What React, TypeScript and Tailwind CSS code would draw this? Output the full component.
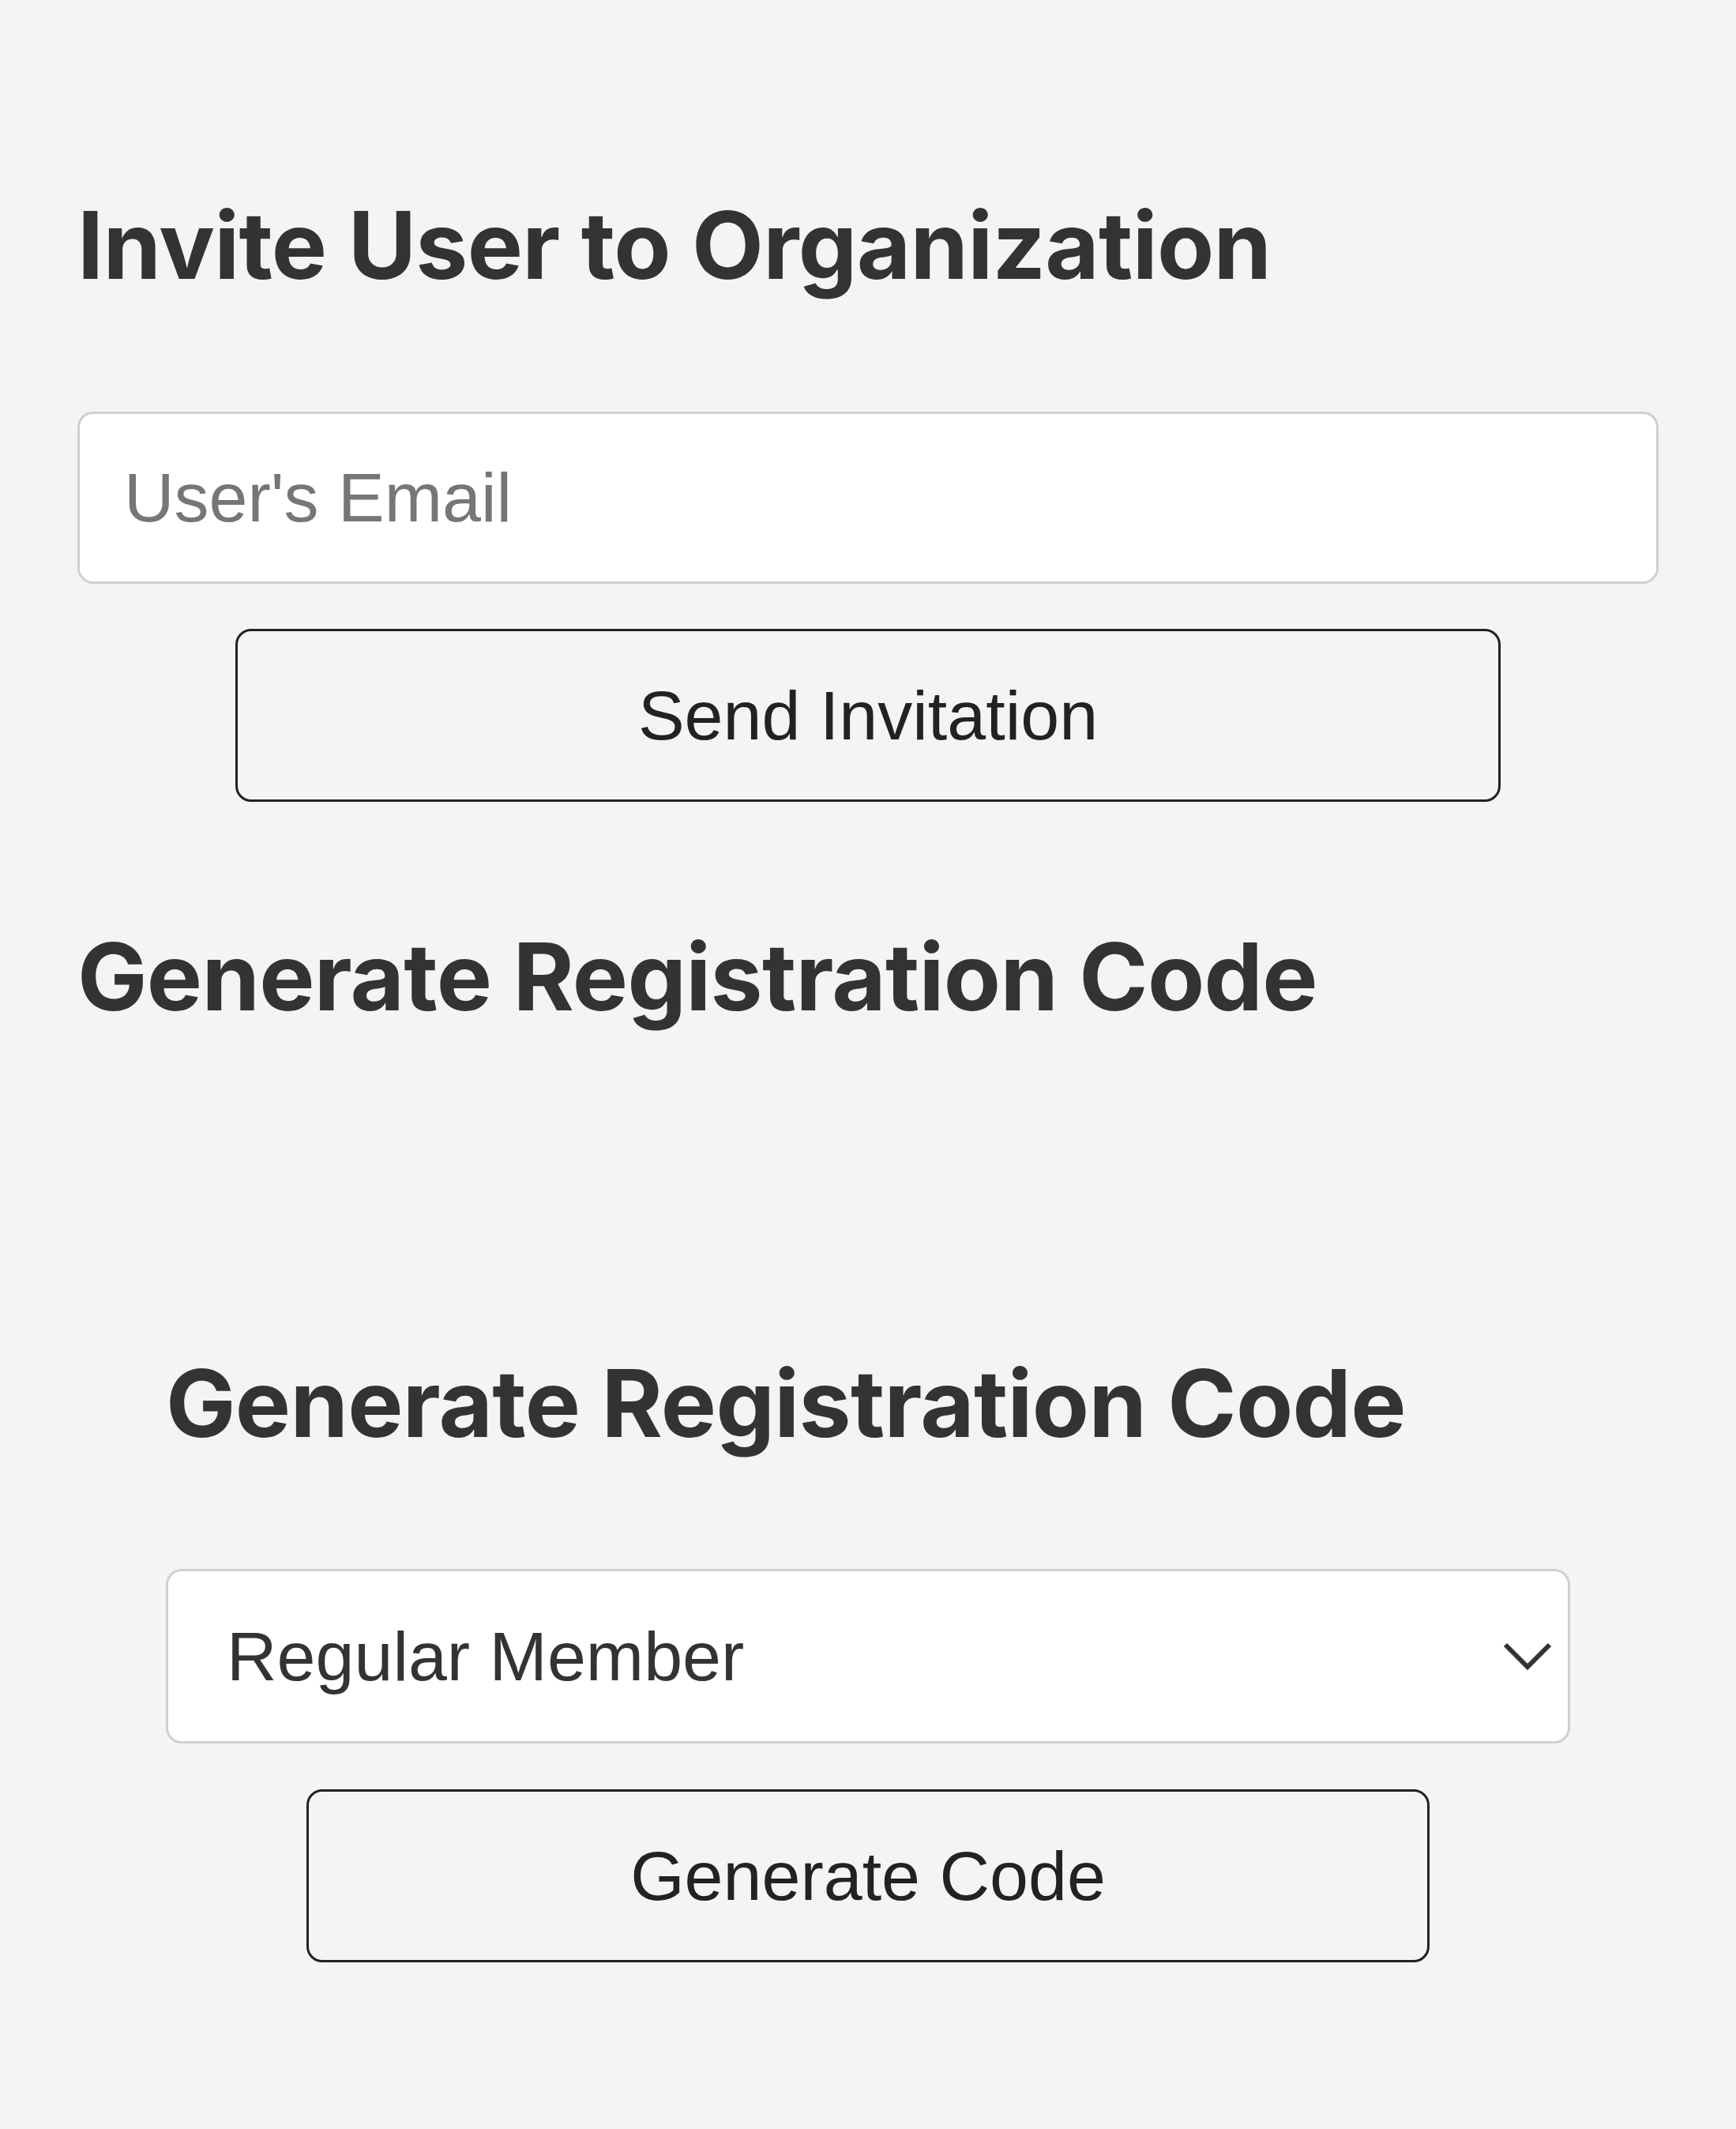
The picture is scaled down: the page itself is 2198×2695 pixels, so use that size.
import { useState } from "react";

const headingCls =
  "font-['Inter',sans-serif] font-bold text-[118px] leading-none tracking-[-0.006em] text-[#333333]";

const buttonCls =
  "block w-4/5 mx-auto h-[219px] rounded-[20px] border-[3px] border-[#222222] bg-transparent text-[88px] text-[#222222] font-['Liberation_Sans',Arial,sans-serif]";

const RegistrationCode = () => {
  const [role, setRole] = useState("member");

  return (
    <section className="px-[112px] mt-[422px]">
      <h2 className={headingCls}>Generate Registration Code</h2>

      <div className="relative mt-[151px]">
        <select
          value={role}
          onChange={(e) => setRole(e.target.value)}
          className="w-full h-[221px] appearance-none rounded-[20px] border-[3px] border-[#d0d0d0] bg-white pl-[74px] pr-[120px] text-[88px] text-[#333333] font-['Liberation_Sans',Arial,sans-serif] outline-none"
        >
          <option value="member">Regular Member</option>
          <option value="admin">Administrator</option>
        </select>
        {/* chevron */}
        <svg
          className="pointer-events-none absolute right-[23px] top-1/2 -translate-y-1/2"
          width="62"
          height="38"
          viewBox="0 0 62 38"
          fill="none"
        >
          <path d="M3 4 L31 32 L59 4" stroke="#333333" strokeWidth="6" />
        </svg>
      </div>

      <button className={`${buttonCls} mt-[58px]`}>Generate Code</button>
    </section>
  );
};

export default function App() {
  const [email, setEmail] = useState("");

  return (
    <div className="min-h-screen bg-[#f4f4f4] px-[98px] pt-[251px] pb-[200px]">
      <h2 className={headingCls}>Invite User to Organization</h2>

      <input
        type="email"
        value={email}
        onChange={(e) => setEmail(e.target.value)}
        placeholder="User's Email"
        className="mt-[152px] block w-full h-[218px] rounded-[20px] border-[3px] border-[#d0d0d0] bg-white pl-[56px] text-[88px] text-[#333333] placeholder:text-[#767676] font-['Liberation_Sans',Arial,sans-serif] outline-none"
      />

      <button className={`${buttonCls} mt-[57px]`}>Send Invitation</button>

      <h2 className={`${headingCls} mt-[162px]`}>Generate Registration Code</h2>

      <RegistrationCode />
    </div>
  );
}
